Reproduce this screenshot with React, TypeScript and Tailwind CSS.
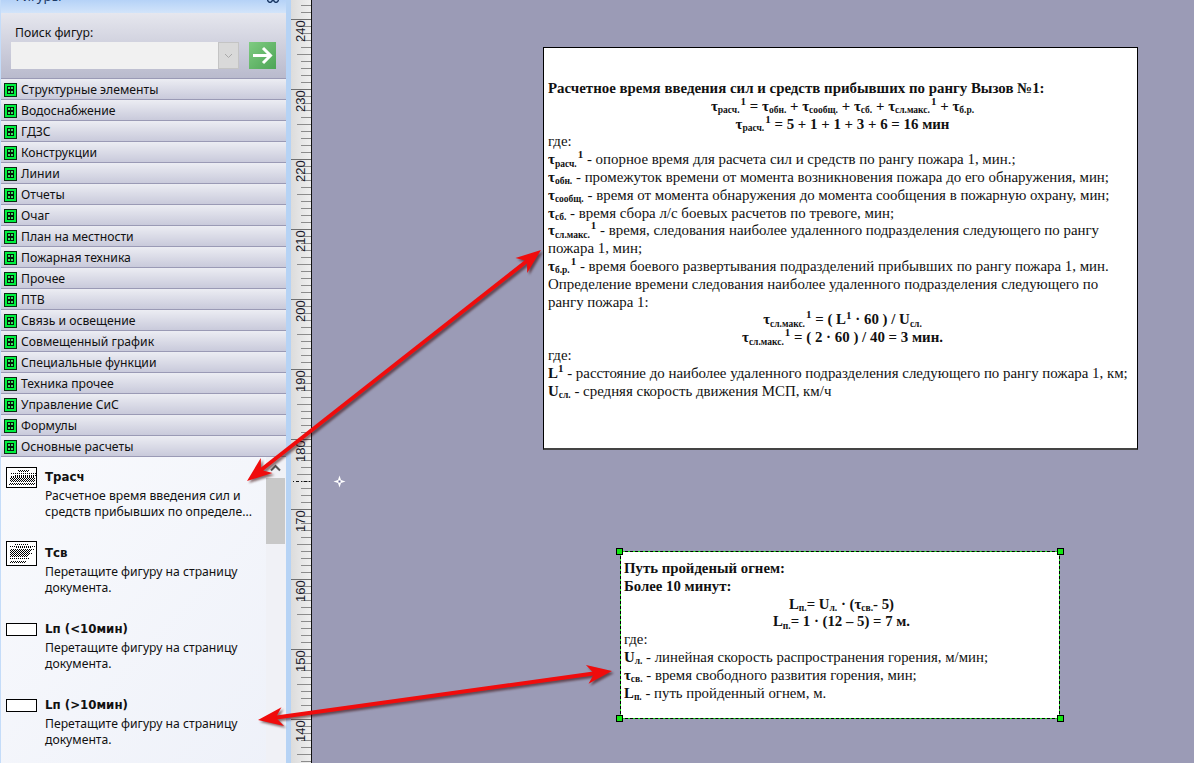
import type { ReactNode } from 'react';

const categories = [
    'Структурные элементы',
    'Водоснабжение',
    'ГДЗС',
    'Конструкции',
    'Линии',
    'Отчеты',
    'Очаг',
    'План на местности',
    'Пожарная техника',
    'Прочее',
    'ПТВ',
    'Связь и освещение',
    'Совмещенный график',
    'Специальные функции',
    'Техника прочее',
    'Управление СиС',
    'Формулы',
    'Основные расчеты',
];

const dragHint = ['Перетащите фигуру на страницу', 'документа.'];

const shapes = [
    { title: 'Трасч', lines: ['Расчетное время введения сил и', 'средств прибывших по определе...'], thumb: 'a' },
    { title: 'Тсв', lines: dragHint, thumb: 'b' },
    { title: 'Lп (<10мин)', lines: dragHint, thumb: 'c' },
    { title: 'Lп (>10мин)', lines: dragHint, thumb: 'c' },
];

function CategoryIcon() {
    return (
        <svg width="13" height="14" viewBox="0 0 13 14" className="shrink-0">
            <rect x="0.5" y="0.5" width="12" height="13" fill="#00f040" stroke="#0b2a12" />
            <rect x="3" y="3" width="7" height="8" fill="#04180a" />
            <rect x="4" y="4" width="2" height="2" fill="#35e860" />
            <rect x="7" y="4" width="2" height="2" fill="#35e860" />
            <rect x="4" y="8" width="2" height="2" fill="#35e860" />
            <rect x="7" y="8" width="2" height="2" fill="#35e860" />
        </svg>
    );
}

// rows of dither per thumbnail: [y, x, width]
const thumbRows: Record<string, number[][]> = {
    a: [[2, 11, 11], [3, 11, 11], [5, 3, 26], [7, 7, 22], [8, 4, 24], [9, 3, 25], [10, 3, 25], [11, 3, 25], [12, 3, 25], [13, 3, 25], [15, 2, 26], [16, 2, 26]],
    b: [[2, 8, 14], [4, 3, 25], [5, 8, 16], [7, 3, 25], [8, 3, 22], [9, 3, 20], [10, 3, 20], [11, 3, 22], [12, 3, 20], [13, 3, 18], [14, 3, 18], [16, 3, 20], [19, 3, 16], [20, 3, 16]],
};

function Thumb({ kind }: { kind: string }) {
    if (kind === 'c') {
        return <div className="w-[31px] h-[13px] border border-black bg-white" />;
    }
    return (
        <svg width="31" height={kind === 'a' ? 21 : 25} className="block bg-white border border-black">
            {thumbRows[kind].map(([y, x, w]) => (
                <line
                    key={y}
                    x1={x + (y % 2)}
                    x2={x + w}
                    y1={y + 0.5}
                    y2={y + 0.5}
                    stroke="#000"
                    strokeDasharray="1 1"
                />
            ))}
        </svg>
    );
}

function Ruler() {
    const ticks: ReactNode[] = [];
    for (let i = 0; i < 110; i++) {
        const y = 5.5 + i * 7;
        const major = (i - 2) % 10 === 0;
        const mid = (i - 7) % 10 === 0;
        if (major) continue;
        ticks.push(<line key={i} x1={mid ? 6 : 10} x2="20" y1={y} y2={y} stroke="#8c8c8c" />);
    }
    const labels = [240, 230, 220, 210, 200, 190, 180, 170, 160, 150, 140];
    return (
        <svg width="20" height="763" className="block">
            {ticks}
            {labels.map((n, i) => (
                <g key={n}>
                    <line x1="0" x2="20" y1={19.5 + i * 70} y2={19.5 + i * 70} stroke="#6f6f6f" />
                    <text
                        transform={`rotate(-90 14 ${42 + i * 70})`}
                        x="14"
                        y={42 + i * 70}
                        fontSize="13"
                        fontFamily="'Liberation Sans', sans-serif"
                        fill="#1c1c2c"
                    >
                        {n}
                    </text>
                </g>
            ))}
            <line x1="2" x2="20" y1="481.5" y2="481.5" stroke="#111" strokeDasharray="1 2 3 2" />
        </svg>
    );
}

function arrow(x1: number, y1: number, x2: number, y2: number) {
    const len = Math.hypot(x2 - x1, y2 - y1);
    const ux = (x2 - x1) / len;
    const uy = (y2 - y1) / len;
    const head = (tx: number, ty: number, dx: number, dy: number) => {
        const bx = tx + dx * 25;
        const by = ty + dy * 25;
        const nx = tx + dx * 18;
        const ny = ty + dy * 18;
        return `${tx},${ty} ${bx - dy * 9.5},${by + dx * 9.5} ${nx},${ny} ${bx + dy * 9.5},${by - dx * 9.5}`;
    };
    return (
        <g>
            <line x1={x1 + ux * 15} y1={y1 + uy * 15} x2={x2 - ux * 15} y2={y2 - uy * 15} stroke="#f00c0c" strokeWidth="4" />
            <polygon points={head(x1, y1, ux, uy)} fill="#f00c0c" />
            <polygon points={head(x2, y2, -ux, -uy)} fill="#f00c0c" />
        </g>
    );
}

// τ with its bold subscript and optional raised 1
function T({ s, one }: { s: string; one?: boolean }) {
    return (
        <b>
            τ<sub className="text-[9.5px]">{s}</sub>
            {one && <sup className="text-[11px] ml-[1px] -top-[6px]">1</sup>}
        </b>
    );
}

function B({ l, s }: { l: string; s: string }) {
    return (
        <b>
            {l}
            <sub className="text-[9.5px]">{s}</sub>
        </b>
    );
}

function Sidebar() {
    return (
        <aside className="w-[291px] h-full shrink-0 flex flex-col border-l border-r-[5px] border-l-[#c4dcf9] border-r-[#b6d3f5] bg-[#eef1f9] font-['Noto_Sans',sans-serif] text-[#111]">
            <div className="h-[13px] shrink-0 overflow-hidden bg-gradient-to-b from-[#b5d2f7] to-[#d2e4fa] flex justify-between pl-[11px] pr-[6px]">
                <span className="text-[13.2px] leading-[15px] -mt-[11px] text-[#1c3a66]">Фигуры</span>
                <svg width="12" height="3" viewBox="0 0 12 3" className="mr-[1px]">
                    <path d="M0 0l3 3 3-3M6 0l3 3 3-3" fill="none" stroke="#1c3a66" strokeWidth="1.5" />
                </svg>
            </div>
            <div className="h-[66px] shrink-0 bg-gradient-to-b from-[#e6e7ee] to-[#b9bacd] pt-[12px] pl-[10px] border-b border-[#9a9ab5]">
                <div className="text-[12.2px] leading-[16px] pl-[4px]">Поиск фигур:</div>
                <div className="flex items-center mt-[1px]">
                    <div className="w-[207px] h-[27px] bg-[#f1f1f1]" />
                    <div className="w-[21px] h-[27px] bg-[#d9d9d9] border border-[#c4c4c4] flex items-center justify-center">
                        <svg width="9" height="6" viewBox="0 0 9 6">
                            <path d="M1 1l3.5 3.5L8 1" fill="none" stroke="#a9a9a9" />
                        </svg>
                    </div>
                    <div className="w-[27px] h-[27px] ml-[10px] bg-gradient-to-br from-[#7fcb82] to-[#4da556] flex items-center justify-center">
                        <svg width="21" height="19" viewBox="0 0 21 19">
                            <path d="M1 9.5h17M11 2l7.5 7.5L11 17" fill="none" stroke="#fff" strokeWidth="3" />
                        </svg>
                    </div>
                </div>
            </div>
            {categories.map((name) => (
                <div
                    key={name}
                    className="h-[21px] shrink-0 flex items-center gap-[4px] pl-[3px] pt-[2px] bg-gradient-to-b from-[#ecedf3] to-[#c9cadb] border-b border-[#9a9ab5] text-[12.2px]"
                >
                    <CategoryIcon />
                    <span>{name}</span>
                </div>
            ))}
            <div className="flex-1 min-h-0 flex bg-gradient-to-br from-[#f9fafd] to-[#eef1f9]">
                <div className="flex-1 pt-[9px] pl-[5px]">
                    {shapes.map((s) => (
                        <div key={s.title} className="h-[76px]">
                            <div className="flex items-center h-[22px]">
                                <div className="w-[39px] shrink-0">
                                    <Thumb kind={s.thumb} />
                                </div>
                                <span className="text-[11.8px] font-bold font-['DejaVu_Sans',sans-serif] leading-[22px]">{s.title}</span>
                            </div>
                            <div className="pl-[39px] text-[12.2px] leading-[16px] whitespace-nowrap">
                                {s.lines.map((l) => (
                                    <div key={l}>{l}</div>
                                ))}
                            </div>
                        </div>
                    ))}
                </div>
                <div className="w-[20px] shrink-0 bg-[#f0f1f6] flex flex-col">
                    <div className="h-[21px] w-[19px] flex items-center justify-center">
                        <svg width="11" height="8" viewBox="0 0 11 8">
                            <path d="M1 6.5l4.5-4.5L10 6.5" fill="none" stroke="#555" strokeWidth="2" />
                        </svg>
                    </div>
                    <div className="w-[19px] h-[66px] bg-[#c8c8c8]" />
                </div>
            </div>
        </aside>
    );
}

export default function App() {
    return (
        <div className="relative w-[1194px] h-[763px] overflow-hidden flex bg-[#9b9bb6]">
            <Sidebar />
            <div className="w-[21px] h-full shrink-0 border-r border-r-[#111] bg-gradient-to-r from-[#dcdcdc] to-[#efefef]">
                <Ruler />
            </div>
            <main className="relative flex-1 font-['Liberation_Serif',serif] text-[#111]">
                <div className="absolute left-[231px] top-[47px] w-[595px] h-[403px] bg-white border border-black border-b-[2px] border-b-[#444] pl-[4px] pt-[32px] text-[14.9px] leading-[17.8px] whitespace-nowrap">
                    <div className="font-bold">Расчетное время введения сил и средств прибывших по рангу Вызов №1:</div>
                    <div className="text-center font-bold">
                        <T s="расч." one /> = <T s="обн." /> + <T s="сообщ." /> + <T s="сб." /> + <T s="сл.макс." one /> + <T s="б.р." />
                    </div>
                    <div className="text-center font-bold">
                        <T s="расч." one /> = 5 + 1 + 1 + 3 + 6 = 16 мин
                    </div>
                    <div>где:</div>
                    <div><T s="расч." one /> - опорное время для расчета сил и средств по рангу пожара 1, мин.;</div>
                    <div><T s="обн." /> - промежуток времени от момента возникновения пожара до его обнаружения, мин;</div>
                    <div><T s="сообщ." /> - время от момента обнаружения до момента сообщения в пожарную охрану, мин;</div>
                    <div><T s="сб." /> - время сбора л/с боевых расчетов по тревоге, мин;</div>
                    <div><T s="сл.макс." one /> - время, следования наиболее удаленного подразделения следующего по рангу</div>
                    <div>пожара 1, мин;</div>
                    <div><T s="б.р." one /> - время боевого развертывания подразделений прибывших по рангу пожара 1, мин.</div>
                    <div>Определение времени следования наиболее удаленного подразделения следующего по</div>
                    <div>рангу пожара 1:</div>
                    <div className="text-center font-bold">
                        <T s="сл.макс." one /> = ( L<sup className="text-[11px]">1</sup> · 60 ) / <B l="U" s="сл." />
                    </div>
                    <div className="text-center font-bold">
                        <T s="сл.макс." one /> = ( 2 · 60 ) / 40 = 3 мин.
                    </div>
                    <div>где:</div>
                    <div><b>L<sup className="text-[11px]">1</sup></b> - расстояние до наиболее удаленного подразделения следующего по рангу пожара 1, км;</div>
                    <div><B l="U" s="сл." /> - средняя скорость движения МСП, км/ч</div>
                </div>

                <div className="absolute left-[308px] top-[551px] w-[440px] h-[168px] bg-[#19e619] border border-dashed border-black">
                    <div className="h-full bg-white pl-[3px] pt-[8px] text-[14.8px] leading-[17.8px] whitespace-nowrap">
                        <div className="font-bold">Путь пройденый огнем:</div>
                        <div className="font-bold">Более 10 минут:</div>
                        <div className="text-center font-bold">
                            <B l="L" s="п." />= <B l="U" s="л." /> · (<T s="св." />- 5)
                        </div>
                        <div className="text-center font-bold">
                            <B l="L" s="п." />= 1 · (12 – 5) = 7 м.
                        </div>
                        <div>где:</div>
                        <div><B l="U" s="л." /> - линейная скорость распространения горения, м/мин;</div>
                        <div><T s="св." /> - время свободного развития горения, мин;</div>
                        <div><B l="L" s="п." /> - путь пройденный огнем, м.</div>
                    </div>
                    <span className="absolute -left-[5px] -top-[4px] w-[7px] h-[7px] bg-[#12e812] border border-black" />
                    <span className="absolute -right-[5px] -top-[4px] w-[7px] h-[7px] bg-[#12e812] border border-black" />
                    <span className="absolute -left-[5px] -bottom-[4px] w-[7px] h-[7px] bg-[#12e812] border border-black" />
                    <span className="absolute -right-[5px] -bottom-[4px] w-[7px] h-[7px] bg-[#12e812] border border-black" />
                </div>

                <svg width="13" height="13" viewBox="0 0 13 13" className="absolute left-[21px] top-[475px]">
                    <path d="M6.5 0.5L8 5L12.5 6.5L8 8L6.5 12.5L5 8L0.5 6.5L5 5Z" fill="#fff" />
                    <rect x="5.5" y="5.5" width="2" height="2" fill="#6a6a9a" />
                </svg>
            </main>
            <svg width="1194" height="763" className="absolute left-0 top-0 pointer-events-none drop-shadow-[2px_2px_1px_rgba(50,0,0,0.55)]">
                {arrow(247, 481, 541, 250)}
                {arrow(258, 720, 612, 671)}
            </svg>
        </div>
    );
}
